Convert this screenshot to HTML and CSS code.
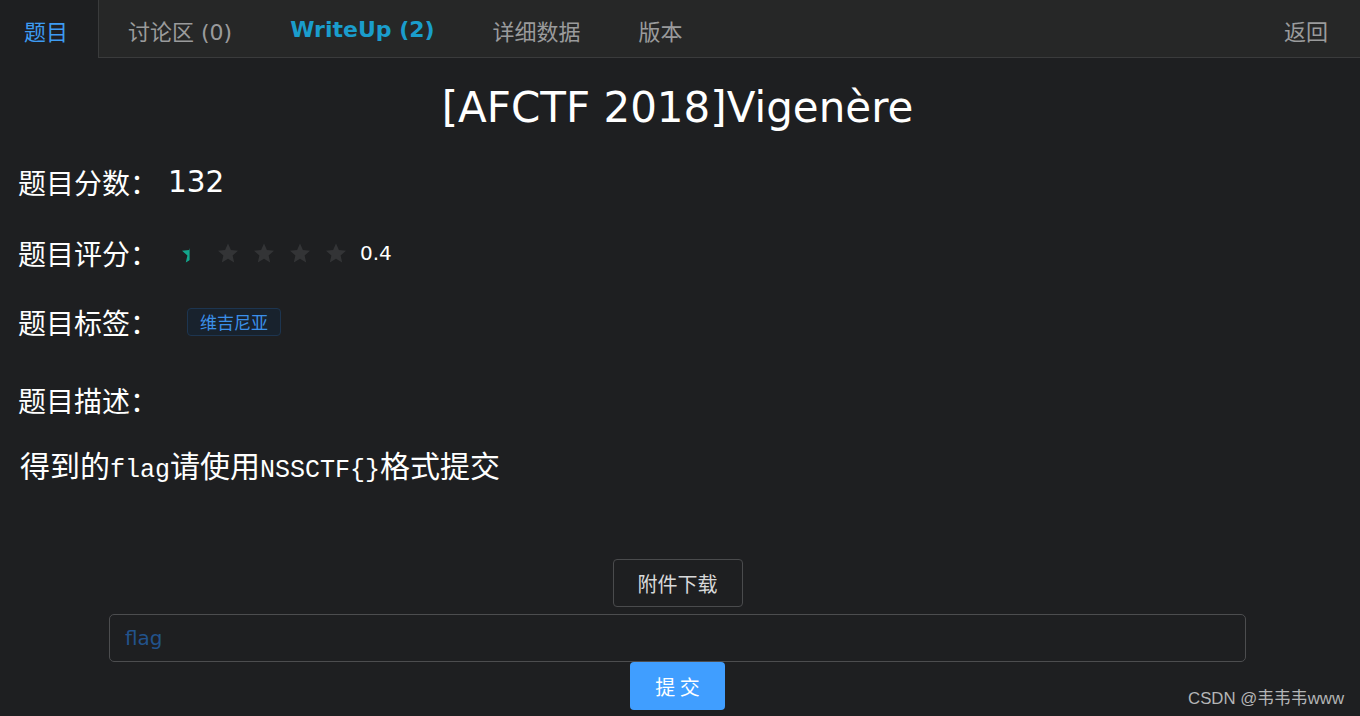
FILE: index.html
```html
<!DOCTYPE html>
<html lang="zh-CN">
<head>
<meta charset="utf-8">
<title>[AFCTF 2018]Vigenère</title>
<link rel="stylesheet" href="styles.css">
</head>
<body>
<nav class="tabs">
  <a class="tab active">题目</a>
  <a class="tab">讨论区 (0)</a>
  <a class="tab writeup">WriteUp (2)</a>
  <a class="tab">详细数据</a>
  <a class="tab">版本</a>
  <span class="spacer"></span>
  <a class="tab back">返回</a>
</nav>
<main class="content">
  <h1 class="title">[AFCTF 2018]Vigenère</h1>
  <div class="row score"><span class="label">题目分数：</span><span class="value">132</span></div>
  <div class="row rating">
    <span class="label">题目评分：</span>
    <span class="stars">
      <span class="star partial"><svg viewBox="0 0 24 24"><path d="M12 2.5l2.9 6.6 7.1.6-5.4 4.7 1.6 7-6.2-3.7-6.2 3.7 1.6-7L2 9.7l7.1-.6z"/></svg></span>
      <span class="star"><svg viewBox="0 0 24 24"><path d="M12 2.5l2.9 6.6 7.1.6-5.4 4.7 1.6 7-6.2-3.7-6.2 3.7 1.6-7L2 9.7l7.1-.6z"/></svg></span>
      <span class="star"><svg viewBox="0 0 24 24"><path d="M12 2.5l2.9 6.6 7.1.6-5.4 4.7 1.6 7-6.2-3.7-6.2 3.7 1.6-7L2 9.7l7.1-.6z"/></svg></span>
      <span class="star"><svg viewBox="0 0 24 24"><path d="M12 2.5l2.9 6.6 7.1.6-5.4 4.7 1.6 7-6.2-3.7-6.2 3.7 1.6-7L2 9.7l7.1-.6z"/></svg></span>
      <span class="star"><svg viewBox="0 0 24 24"><path d="M12 2.5l2.9 6.6 7.1.6-5.4 4.7 1.6 7-6.2-3.7-6.2 3.7 1.6-7L2 9.7l7.1-.6z"/></svg></span>
    </span>
    <span class="rate-text">0.4</span>
  </div>
  <div class="row tags"><span class="label">题目标签：</span><span class="tag">维吉尼亚</span></div>
  <div class="row desc-head"><span class="label">题目描述：</span></div>
  <p class="desc">得到的<span class="mono">flag</span>请使用<span class="mono">NSSCTF{}</span>格式提交</p>
  <div class="actions">
    <button class="btn-download">附件下载</button>
    <input class="flag-input" type="text" placeholder="flag">
    <button class="btn-submit">提 交</button>
  </div>
</main>
<div class="watermark">CSDN @韦韦韦www</div>
</body>
</html>
```
FILE: styles.css
```css
html, body {
  margin: 0;
  padding: 0;
  background: #1e1f21;
  height: 100%;
  overflow: hidden;
}
body {
  font-family: "DejaVu Sans", "Noto Sans CJK SC", sans-serif;
  color: #ffffff;
  position: relative;
}
.tabs {
  display: flex;
  align-items: stretch;
  height: 57px;
  background: #262727;
  border-bottom: 1px solid #3a3b3c;
}
.tab {
  display: flex;
  align-items: center;
  padding: 2px 29px 0;
  font-size: 22px;
  color: #9a9b9c;
  font-family: "DejaVu Sans", "Noto Sans CJK SC", sans-serif;
}
.tab.active {
  color: #3d9bf2;
  background: #1e1f21;
  padding: 2px 30px 0 24px;
  border-right: 1px solid #3a3b3c;
  margin-bottom: -1px;
}
.tab.writeup {
  color: #1a9dcc;
  font-weight: bold;
}
.spacer { flex: 1; }
.tab.back { padding: 2px 32px 0 30px; }

.content {
  padding: 0 23px 0 18px;
}
.title {
  margin: 0;
  padding-top: 24px;
  text-align: center;
  font-weight: normal;
  font-size: 42px;
  line-height: 52px;
  color: #ffffff;
}
.row {
  display: flex;
  align-items: center;
  font-size: 28px;
}
.label {
  font-family: "Noto Sans CJK SC", sans-serif;
}
.score { margin-top: 28px; height: 40px; }
.score .value { font-size: 29.5px; margin-left: 10px; }
.rating { margin-top: 31px; height: 40px; }
.stars { display: flex; margin-left: 22px; }
.star {
  width: 24px;
  height: 24px;
  margin-right: 12px;
  display: inline-block;
}
.star svg { width: 24px; height: 24px; fill: #333436; display: block; }
.star.partial svg {
  fill: #13a58c;
  clip-path: polygon(0 0, 40% 0, 40% 100%, 0 100%);
}
.rate-text { font-size: 20px; }
.tags { margin-top: 29px; height: 40px; }
.tag {
  margin-left: 29px;
  font-size: 17px;
  font-family: "Noto Sans CJK SC", sans-serif;
  color: #3b8fe8;
  background: #18222d;
  border: 1px solid #1d3550;
  border-radius: 4px;
  padding: 0 12px;
  line-height: 26px;
}
.desc-head { margin-top: 38px; height: 40px; }
.desc {
  margin: 24px 0 0 2px;
  font-size: 30px;
  line-height: 40px;
  font-family: "Noto Sans CJK SC", serif;
  color: #ffffff;
}
.mono {
  font-family: "Liberation Mono", monospace;
  font-size: 25px;
}
.actions {
  display: flex;
  flex-direction: column;
  align-items: center;
  margin-top: 68px;
}
.btn-download {
  width: 130px;
  height: 48px;
  background: transparent;
  border: 1px solid #4a4b4d;
  border-radius: 4px;
  color: #d8d9da;
  font-size: 20px;
  font-family: "Noto Sans CJK SC", sans-serif;
}
.flag-input {
  margin-top: 7px;
  width: 1137px;
  height: 48px;
  box-sizing: border-box;
  background: #1e1f21;
  border: 1px solid #4c4d4f;
  border-radius: 5px;
  padding: 0 15px;
  font-size: 20px;
  font-family: "DejaVu Sans", sans-serif;
  outline: none;
}
.flag-input::placeholder { color: #22538c; }
.btn-submit {
  width: 95px;
  height: 48px;
  background: #409eff;
  border: none;
  border-radius: 4px;
  color: #ffffff;
  font-size: 20px;
  font-family: "Noto Sans CJK SC", sans-serif;
}
.watermark {
  position: absolute;
  right: 16px;
  bottom: 7px;
  font-size: 16.8px;
  color: #b4b5b6;
  font-family: "Liberation Sans", "Noto Sans CJK SC", sans-serif;
}
```
